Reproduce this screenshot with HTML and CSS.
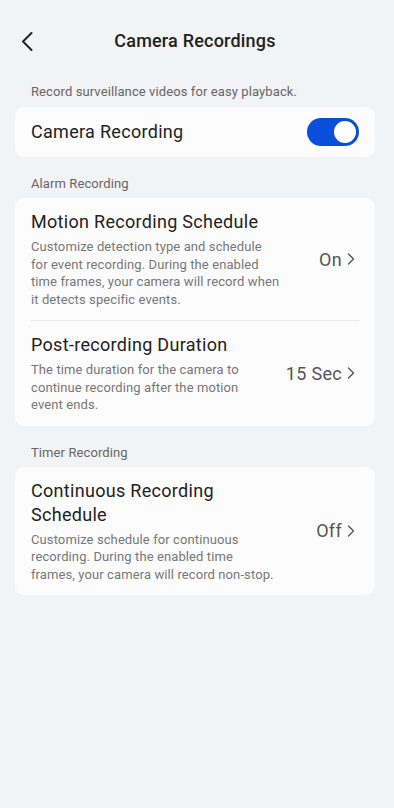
FILE: index.html
```html
<!DOCTYPE html>
<html>
<head>
<meta charset="utf-8">
<link rel="stylesheet" href="styles.css">
</head>
<body>
<div class="page">
  <header class="header">
    <div class="back">
      <svg width="14" height="20" viewBox="0 0 14 20"><path d="M11.5 2 L3 10.5 L11.5 19" fill="none" stroke="#222" stroke-width="2" stroke-linecap="round" stroke-linejoin="round"/></svg>
    </div>
    <h1 class="title">Camera Recordings</h1>
  </header>

  <div class="label first">Record surveillance videos for easy playback.</div>
  <div class="card">
    <div class="row simple">
      <div class="row-title">Camera Recording</div>
      <div class="toggle"><div class="knob"></div></div>
    </div>
  </div>

  <div class="label">Alarm Recording</div>
  <div class="card">
    <div class="row">
      <div class="text">
        <div class="row-title">Motion Recording Schedule</div>
        <div class="desc">Customize detection type and schedule<br>for event recording. During the enabled<br>time frames, your camera will record when<br>it detects specific events.</div>
      </div>
      <div class="value">On<svg class="chev" width="8" height="12" viewBox="0 0 8 12"><path d="M1.5 1 L6.5 6 L1.5 11" fill="none" stroke="#555" stroke-width="1.4" stroke-linecap="round" stroke-linejoin="round"/></svg></div>
    </div>
    <div class="divider"></div>
    <div class="row">
      <div class="text">
        <div class="row-title">Post-recording Duration</div>
        <div class="desc">The time duration for the camera to<br>continue recording after the motion<br>event ends.</div>
      </div>
      <div class="value">15 Sec<svg class="chev" width="8" height="12" viewBox="0 0 8 12"><path d="M1.5 1 L6.5 6 L1.5 11" fill="none" stroke="#555" stroke-width="1.4" stroke-linecap="round" stroke-linejoin="round"/></svg></div>
    </div>
  </div>

  <div class="label">Timer Recording</div>
  <div class="card">
    <div class="row">
      <div class="text">
        <div class="row-title">Continuous Recording<br>Schedule</div>
        <div class="desc">Customize schedule for continuous<br>recording. During the enabled time<br>frames, your camera will record non-stop.</div>
      </div>
      <div class="value">Off<svg class="chev" width="8" height="12" viewBox="0 0 8 12"><path d="M1.5 1 L6.5 6 L1.5 11" fill="none" stroke="#555" stroke-width="1.4" stroke-linecap="round" stroke-linejoin="round"/></svg></div>
    </div>
  </div>
</div>
</body>
</html>
```
FILE: styles.css
```css
* { box-sizing: border-box; }
html, body { margin: 0; padding: 0; }
body {
  background: #f2f3f5;
  font-family: Roboto, "Liberation Sans", sans-serif;
  color: #222;
  height: 808px;
}
.page {
  width: 390px;
  padding: 0 15px;
}
.header {
  height: 82px;
  display: flex;
  align-items: center;
  justify-content: center;
  position: relative;
}
.back {
  position: absolute;
  left: 5px;
  top: 31px;
  width: 14px;
  height: 20px;
  display: flex;
}
.title {
  margin: 0;
  font-size: 18px;
  font-weight: 500;
  letter-spacing: 0.2px;
  color: #222;
  line-height: 24px;
}
.label {
  font-size: 13px;
  line-height: 17px;
  letter-spacing: 0.1px;
  color: #666;
  padding-left: 16px;
  margin-top: 18px;
  margin-bottom: 6px;
}
.label.first { margin-top: 1px; margin-bottom: 7px; }
.card {
  background: #fcfcfd;
  border-radius: 9px;
  padding: 0 16px;
}
.row {
  display: flex;
  align-items: center;
  justify-content: space-between;
  padding: 12px 0;
  gap: 10px;
}
.row.simple { height: 50px; padding: 0; }
.row-title {
  font-size: 18px;
  line-height: 24px;
  letter-spacing: 0.3px;
  color: #222;
}
.text { flex: 0 1 auto; white-space: nowrap; }
.desc {
  margin-top: 4px;
  font-size: 13px;
  line-height: 17.5px;
  letter-spacing: 0.1px;
  color: #777;
}
.value {
  display: flex;
  align-items: center;
  font-size: 18px;
  letter-spacing: 0.3px;
  color: #555;
  white-space: nowrap;
  gap: 5px;
  padding-right: 4px;
}
.chev { display: block; }
.divider {
  height: 1px;
  background: #e8e9eb;
}
.toggle {
  width: 52px;
  height: 28px;
  border-radius: 14px;
  background: #0a4fd9;
  display: flex;
  align-items: center;
  justify-content: flex-end;
  padding-right: 3px;
}
.knob {
  width: 22px;
  height: 22px;
  border-radius: 50%;
  background: #fff;
}
```
